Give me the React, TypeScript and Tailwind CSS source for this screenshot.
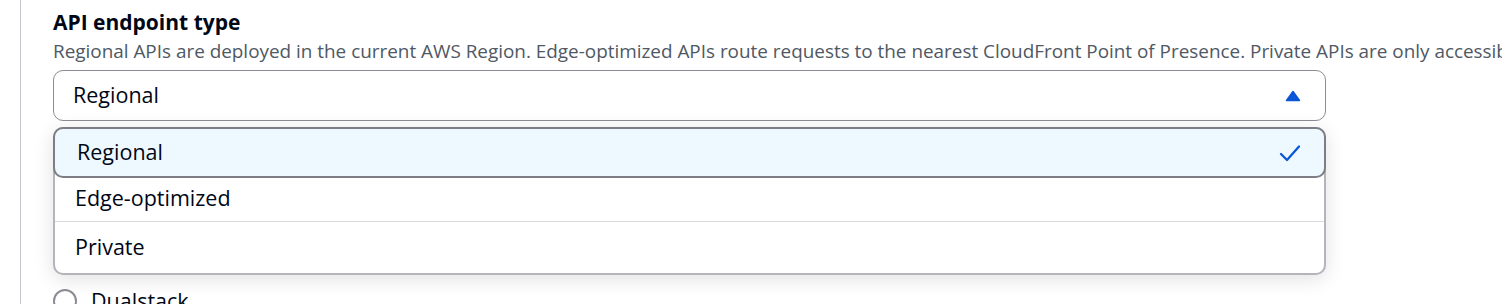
import React from "react";

const options = ["Regional", "Edge-optimized", "Private"];

function CheckIcon() {
  return (
    <svg width="24" height="24" viewBox="0 0 24 24" fill="none">
      <path d="M3 13 L9 19 L21 5.5" stroke="#0a56d6" strokeWidth="2.3" strokeLinecap="round" strokeLinejoin="round" />
    </svg>
  );
}

function CaretUp() {
  return (
    <svg width="16" height="12" viewBox="0 0 16 12">
      <path d="M8 1.5 L14.5 10.5 H1.5 Z" fill="#0a56d6" stroke="#0a56d6" strokeWidth="1.5" strokeLinejoin="round" />
    </svg>
  );
}

export default function App() {
  return (
    <div className="flex h-[304px] w-[1502px] overflow-hidden bg-white font-['Open_Sans',sans-serif] text-[#000716]">
      <div className="w-[20px] shrink-0" />
      <div className="w-px shrink-0 bg-[#c6c6cd]" />
      <div className="flex min-w-0 flex-1 flex-col pl-[32px] pt-[7px]">
        <div className="text-[21px] font-bold leading-[30px]">API endpoint type</div>
        <div className="mt-[1px] whitespace-nowrap text-[18.9px] leading-[26px] text-[#4f5864]">
          Regional APIs are deployed in the current AWS Region. Edge-optimized APIs route requests to the nearest CloudFront Point of Presence. Private APIs are only accessible from VPCs.
        </div>
        <div className="mt-[6px] w-[1273px]">
          <div className="flex h-[51px] items-center justify-between rounded-[10px] border border-[#8c8c94] pl-[19px] pr-[24px] text-[21.5px]">
            <span>Regional</span>
            <CaretUp />
          </div>
          <div className="relative mt-[6px] rounded-[10px] border-2 border-[#b4b4bb] bg-white shadow-[0_4px_20px_rgba(0,7,22,0.12)]">
            <div className="-m-[2px] flex h-[51px] items-center justify-between rounded-[10px] border-2 border-[#7d7d85] bg-[#eef9ff] pl-[22px] pr-[22px] text-[21.5px]">
              <span>{options[0]}</span>
              <CheckIcon />
            </div>
            <div className="flex h-[46px] items-center border-b border-[#dcdce0] pl-[20px] text-[21.5px]">
              {options[1]}
            </div>
            <div className="flex h-[51px] items-center pl-[20px] text-[21.5px]">{options[2]}</div>
          </div>
          <div className="mt-[12px] flex items-center gap-[14px]">
            <div className="h-[24px] w-[24px] shrink-0 rounded-full border-2 border-[#8c8c94]" />
            <span className="text-[21.5px] leading-[28px]">Dualstack</span>
          </div>
        </div>
      </div>
    </div>
  );
}
